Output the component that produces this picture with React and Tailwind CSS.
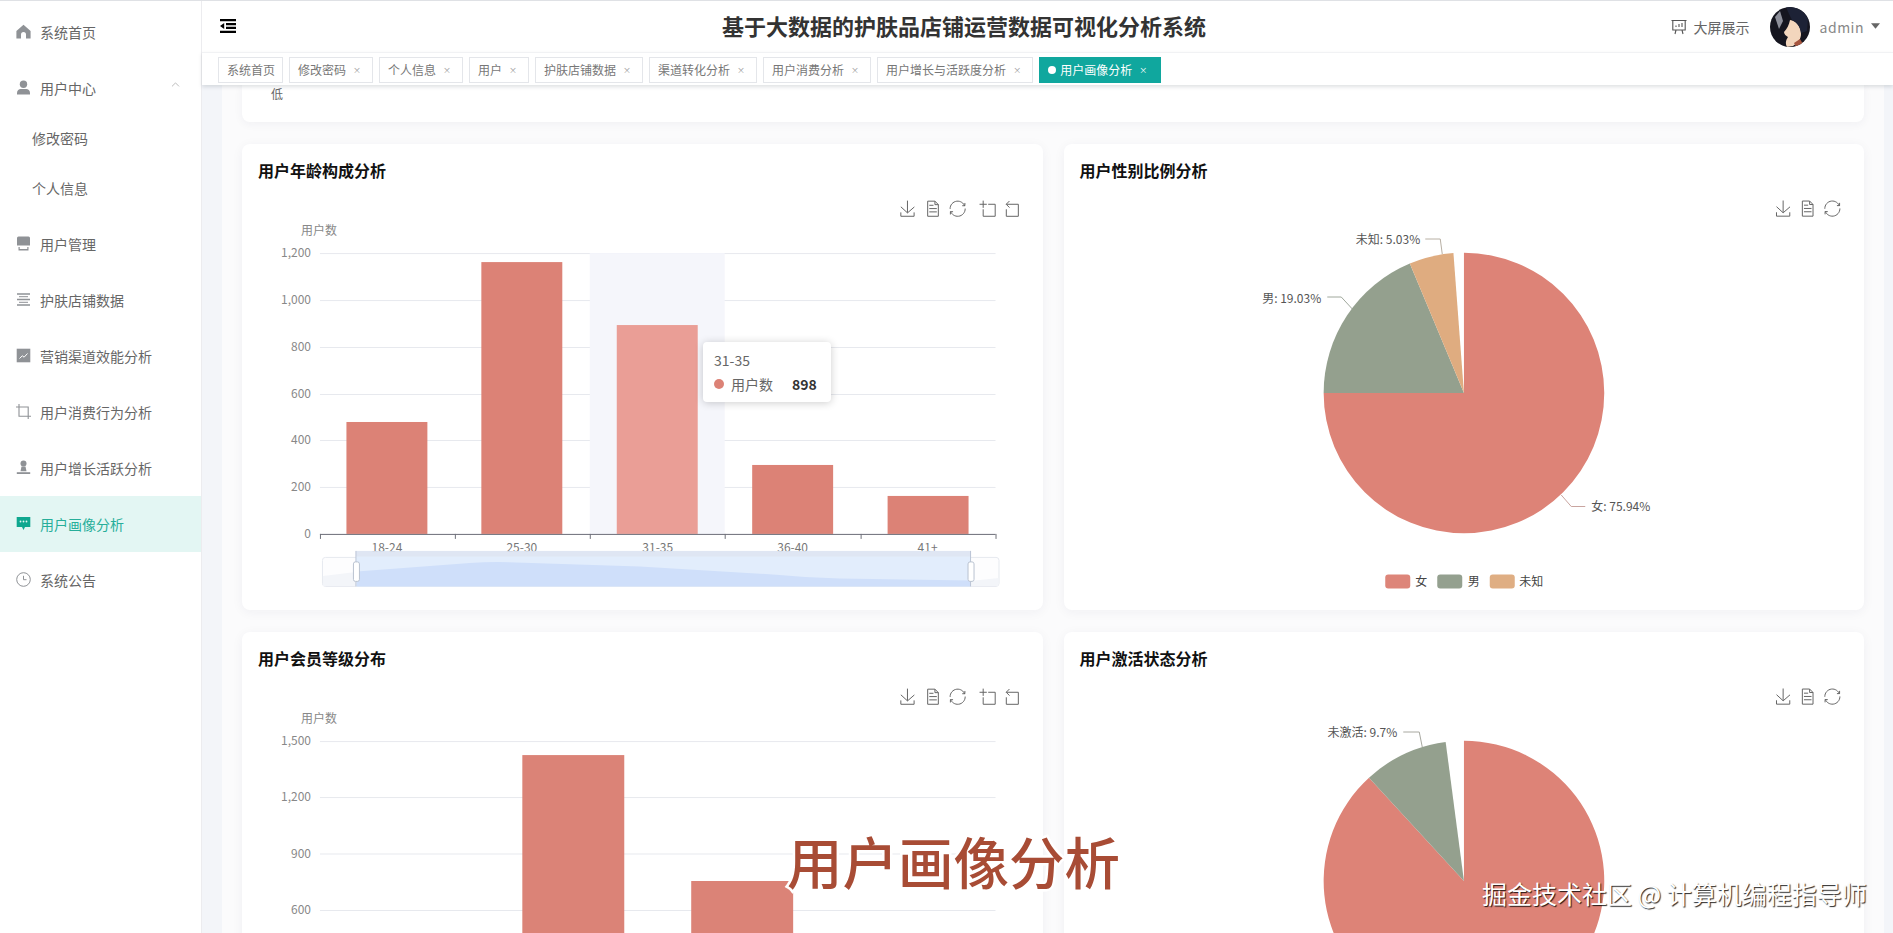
import React from "react";
import { ChevronUp } from "lucide-react";

const I = ({ children, className = "text-[#8f9296]" }) => (
  <svg viewBox="0 0 15 15" className={`w-[15px] h-[15px] shrink-0 ${className}`} fill="currentColor">
    {children}
  </svg>
);

const icons = {
  home: <I><path d="M7.5.8 14.6 7v7.4H10V10.6a2.5 2.5 0 0 0-5 0v3.8H.4V7z" /></I>,
  user: <I><circle cx="7.5" cy="4.2" r="3.7" /><path d="M1 13c0-2.6 2-4 3.6-4h5.8C12 9 14 10.4 14 13v1.4H1z" /></I>,
  goods: <I><path d="M1 2a1.5 1.5 0 0 1 1.5-1.5h10A1.5 1.5 0 0 1 14 2v7.5H1z" /><path d="M2.5 11h1.2v2h7.6v-2h1.2v3.4h-10z" /></I>,
  ops: <I><path d="M1 2h13M1 7.5h13M1 13h13" stroke="currentColor" strokeWidth="1.5" fill="none" /><path d="M3 4.7h9M3 10.3h9" stroke="currentColor" strokeWidth="1" fill="none" /></I>,
  market: <I><path d="M.7.7h13.6v13.6H.7z" /><path d="M3.5 10.5 6.3 7.8l1.8 1.4 3.4-3.7" stroke="#fff" strokeWidth="1" fill="none" /></I>,
  crop: <I><path d="M3 0v12.2h12M0 3h12.2v12" stroke="currentColor" strokeWidth="1.1" fill="none" /></I>,
  custom: <I><circle cx="7.5" cy="3.6" r="3" /><path d="M5.5 6.5h4l1 4.8h-6z" /><path d="M.8 12.2h13.4V14H.8z" /></I>,
  chat: <I className="text-[#0fa78f]"><path d="M.7 1h13.6v10H9l-1.5 3L6 11H.7z" /><circle cx="4.5" cy="5.5" r=".9" fill="#e3f6f3" /><circle cx="7.5" cy="5.5" r=".9" fill="#e3f6f3" /><circle cx="10.5" cy="5.5" r=".9" fill="#e3f6f3" /></I>,
  clock: <I><circle cx="7.5" cy="7.5" r="6.8" fill="none" stroke="currentColor" strokeWidth="1" /><path d="M7.5 3.8v3.9h3" fill="none" stroke="currentColor" strokeWidth="1" /></I>,
};

const Item = ({ icon, label, active, chevron }) => (
  <div className={`h-14 flex items-center pl-4 pb-[2px] gap-[9px] text-sm ${active ? "bg-[#e3f6f3] text-[#27ae9a]" : "text-[#666666]"}`}>
    {icons[icon]}
    <span className="pt-[1px]">{label}</span>
    {chevron && <ChevronUp size={13} strokeWidth={1.2} className="ml-auto mr-[19px] mb-[6px] text-[#999999]" />}
  </div>
);

const Sub = ({ label }) => <div className="h-[50px] flex items-center pl-8 pb-[6px] text-sm text-[#666666]">{label}</div>;

const Sidebar = () => (
  <aside className="w-[202px] shrink-0 bg-white border-r border-[#ececef] pt-[3px]">
    <Item icon="home" label="系统首页" />
    <Item icon="user" label="用户中心" chevron />
    <Sub label="修改密码" />
    <Sub label="个人信息" />
    <Item icon="goods" label="用户管理" />
    <Item icon="ops" label="护肤店铺数据" />
    <Item icon="market" label="营销渠道效能分析" />
    <Item icon="crop" label="用户消费行为分析" />
    <Item icon="custom" label="用户增长活跃分析" />
    <Item icon="chat" label="用户画像分析" active />
    <Item icon="clock" label="系统公告" />
  </aside>
);

const Avatar = () => (
  <svg viewBox="0 0 40 40" className="w-10 h-10 rounded-full shrink-0">
    <rect width="40" height="40" fill="#15151f" />
    <path d="M20 13c6 1 11 6 11 14 0 5-3 9-8 12l-6 1c-2-4-1-7 1-10-2-1-4-3-4-5 3-3 5-7 6-12z" fill="#f3d6bd" />
    <path d="M16 0c8-1 18 2 22 12l-1 12-6 2c-1-6-4-11-9-13l-3-6z" fill="#1d2236" />
    <path d="M5 10l5-6 3 10-4 8z" fill="#8d8f9a" />
    <path d="M24 36l6-4 3 5-7 3z" fill="#a6553f" />
  </svg>
);

const Header = () => (
  <header className="h-[51px] flex items-center bg-white pl-[18px] pr-[13px]">
    <svg viewBox="0 0 16 14" className="w-4 h-[14px] shrink-0 text-black mb-[1px]" fill="currentColor">
      <path d="M0 0h16v2.2H0zM0 11.8h16V14H0zM6 4h10v2.2H6zM6 7.8h10V10H6zM0 7l4.2-3v6z" />
    </svg>
    <h1 className="ml-[486px] mb-[3px] text-[22px] leading-none font-bold text-[#333333] whitespace-nowrap">基于大数据的护肤品店铺运营数据可视化分析系统</h1>
    <div className="ml-auto flex items-center text-sm text-[#666666]">
      <svg viewBox="0 0 16 16" className="w-4 h-4 mr-[7px]" fill="none" stroke="#555" strokeWidth="1.1">
        <path d="M.5 1.5h15M1.8 1.5V11h12.4V1.5M5 11l-1 4M11 11l1 4M5 8V6.5M8 8V5M11 8V4" />
      </svg>
      <span>大屏展示</span>
      <div className="ml-5 mr-[10px]"><Avatar /></div>
      <span className="text-[#888888] tracking-[0.5px]">admin</span>
      <svg viewBox="0 0 10 6" className="w-[9px] h-[6px] ml-[7px] mb-[1px]" fill="#666"><path d="M0 0h10L5 6z" /></svg>
    </div>
  </header>
);

const tabs = ["修改密码", "个人信息", "用户", "护肤店铺数据", "渠道转化分析", "用户消费分析", "用户增长与活跃度分析"];

const Tabs = () => (
  <div className="relative z-10 h-[33px] pt-[4px] pl-4 flex gap-[6px] bg-white border-t border-[#f1f2f4] shadow-[0_2px_4px_rgba(0,21,41,0.13)] text-xs">
    <div className="h-[26px] pl-2 pr-[7px] flex items-center border border-[#e4e6ea] text-[#777777]">系统首页</div>
    {tabs.map((t) => (
      <div key={t} className="h-[26px] pl-2 pr-[9px] flex items-center border border-[#e4e6ea] text-[#777777]">
        {t}
        <span className="w-3 ml-[5px] text-center text-[8px] text-[#999999]">×</span>
      </div>
    ))}
    <div className="h-[26px] pl-[9px] pr-[12px] flex items-center bg-[#10a79e] text-white">
      <span className="w-2 h-2 rounded-full bg-white mr-[4px]" />
      用户画像分析
      <span className="w-3 ml-[5px] text-center text-[8px]">×</span>
    </div>
  </div>
);

const Toolbox = ({ xs, y }) => {
  const paths = [
    "M4.7,22.9L29.3,45.5L54.7,23.4M4.6,43.6L4.6,58L53.8,58L53.8,43.6M29.2,45.1L29.2,0",
    "M17.5,17.3H33M45.4,29.5h-28M11.5,2v56H51V14.8L38.4,2H11.5zM38.4,2.2v12.7H51M45.4,41.7h-28",
    "M47,18.9h9.8V8.7M56.3,20.1C52.1,9,40.5,0.6,26.8,2.1C12.6,3.7,1.6,16.2,2.1,30.6M13,41.1H3.1v10.2M3.7,39.9c4.2,11.1,15.8,19.5,29.5,18c14.2-1.6,25.2-14.1,24.7-28.5",
    "M0,13.5h26.9M13.5,26.9V0M32.1,13.5H58V58H13.5V32.1",
    "M22,1.4L9.9,13.5l12.3,12.3M10.3,13.5H54.9v44.6H10.3v-26",
  ];
  return xs.map((x, i) => (
    <path key={i} transform={`translate(${x},${y}) scale(0.27)`} d={paths[i]} fill="none" stroke="#666" strokeWidth="1" vectorEffect="non-scaling-stroke" />
  ));
};

const Label = (p) => <text fontSize="12" dominantBaseline="central" {...p} />;

const GridChart = ({ ticks, bars, barW, bottom, dy, height, zoomBar }) => (
  <svg viewBox={`242 ${192 + dy} 801 ${height}`} className="w-full block" style={{ height }}>
    <Toolbox xs={[900, 925, 950, 980, 1004]} y={200.5 + dy} />
    <Label x="319" y={229 + dy} textAnchor="middle" fill="#888">用户数</Label>
    {ticks.map(([v, y]) => (
      <g key={v}>
        <line x1="320" x2="996" y1={y} y2={y} stroke="#e7e9ee" />
        <Label x="311" y={y - 2} textAnchor="end" fill="#888">{v}</Label>
      </g>
    ))}
    {zoomBar && <rect x="590" y="253" width="135" height="281" fill="#f5f6fb" />}
    {bars.map(([x, t, c], i) => (
      <rect key={i} x={x} y={t} width={barW} height={bottom - t} fill={c || "#dc8276"} />
    ))}
    {zoomBar && (
      <g>
        <line x1="320" x2="996" y1="534.5" y2="534.5" stroke="#6e7079" />
        {[320, 455, 590, 725, 861, 996].map((x) => (
          <line key={x} x1={x + 0.5} x2={x + 0.5} y1="534" y2="539" stroke="#6e7079" />
        ))}
        {[["18-24", 387], ["25-30", 522], ["31-35", 658], ["36-40", 793], ["41+", 928]].map(([t, x]) => (
          <Label key={t} x={x} y="546.5" textAnchor="middle" fill="#777">{t}</Label>
        ))}
        <rect x="322.5" y="557.5" width="677" height="29" rx="3" fill="#fdfdfe" stroke="#e6e9ef" />
        <path d="M323 576 L356 572 V586 H323z M971 581 L999 578 V586 H971z" fill="#f3f5f9" />
        <rect x="356" y="551" width="615.5" height="6" fill="#dce4f2" fillOpacity="0.92" />
        <rect x="356" y="557" width="615.5" height="29.5" fill="#e2edfc" />
        <path d="M357 571.7L470 563Q493 561.5 516 562.5L640 566.5L780 575Q810 578 840 578.5L971 580.6V586.5H357z" fill="#cfdffa" />
        {[356, 971].map((x) => (
          <g key={x}>
            <line x1={x} x2={x} y1="551" y2="586.5" stroke="#bcc6d6" />
            <rect x={x - 2.5} y="562" width="6" height="19.5" rx="2" fill="#fff" stroke="#b9c2d0" />
          </g>
        ))}
      </g>
    )}
  </svg>
);

const Pie = ({ cy, cut, dy, height, legend, children }) => {
  const cx = 1463.7;
  const r = 140.3;
  const pt = (a) => {
    const t = (a * Math.PI) / 180;
    return `${(cx + r * Math.sin(t)).toFixed(2)} ${(cy - r * Math.cos(t)).toFixed(2)}`;
  };
  const slice = ([a, b, c]) => (
    <path key={a} d={`M${cx} ${cy}L${pt(a)}A${r} ${r} 0 ${b - a > 180 ? 1 : 0} 1 ${pt(b)}Z`} fill={c} />
  );
  return (
    <svg viewBox={`1064 ${192 + dy} 800 ${height}`} className="w-full block" style={{ height }}>
      <Toolbox xs={[1775, 1799, 1824]} y={200.5 + dy} />
      {children}
      {cut.map(slice)}
      {legend &&
        [[1385, "女", "#dd8579", 1415], [1437, "男", "#94a08f", 1467.5], [1489.5, "未知", "#dfae83", 1519]].map(([x, t, c, tx]) => (
          <g key={t}>
            <rect x={x} y="574.5" width="25" height="14" rx="3" fill={c} />
            <Label x={tx} y="580.5" fill="#444">{t}</Label>
          </g>
        ))}
    </svg>
  );
};

const Card = ({ title, children }) => (
  <section className="bg-white rounded-lg shadow-[0_2px_12px_rgba(30,40,70,0.05)] h-[466px]">
    <h2 className="h-12 pl-4 pt-[15px] text-base leading-[22px] font-bold text-[#111111]">{title}</h2>
    {children}
  </section>
);

const Tooltip = () => (
  <div className="absolute left-[703px] top-[342px] w-[128px] h-[60px] bg-white rounded shadow-[0_1px_8px_rgba(0,0,0,0.2)] pl-[11px] pt-[8px] text-sm text-[#666666]">
    <div className="leading-5">31-35</div>
    <div className="flex items-center mt-[4px] leading-5">
      <span className="w-[10px] h-[10px] rounded-full bg-[#dc8276] mr-[7px]" />
      用户数
      <b className="ml-[19px] text-[#333333] font-bold">898</b>
    </div>
  </div>
);

export default function App() {
  return (
    <div className="relative w-[1893px] h-[933px] overflow-hidden bg-[#f3f5f9] font-['Noto_Sans_CJK_SC','Noto_Sans',sans-serif]">
      <div className="h-px bg-[#dfe1e5]" />
      <div className="flex h-[932px]">
        <Sidebar />
        <main className="flex-1 min-w-0 flex flex-col">
          <Header />
          <Tabs />
          <div className="flex-1 min-h-0 overflow-hidden pl-[20px] pr-[9px]">
            <div className="bg-[#fbfbfc] h-full px-5 overflow-hidden">
              <div className="h-[37px] bg-white rounded-b-lg shadow-[0_2px_10px_rgba(30,40,70,0.05)] pl-[29px] pt-[1px] text-xs leading-4 text-[#666666]">低</div>
              <div className="grid grid-cols-2 gap-x-[21px] gap-y-[22px] mt-[22px]">
                <Card title="用户年龄构成分析">
                  <GridChart
                    dy={0}
                    height={418}
                    zoomBar
                    barW={81}
                    bottom={534}
                    ticks={[["1,200", 253.5], ["1,000", 300.5], ["800", 347.5], ["600", 394.5], ["400", 440.5], ["200", 487.5], ["0", 534.5]]}
                    bars={[[346.5, 422], [481.5, 262], [617, 325, "#ea9e96"], [752.5, 465], [888, 496]]}
                  />
                </Card>
                <Card title="用户性别比例分析">
                  <Pie
                    cy={393}
                    dy={0}
                    height={418}
                    legend
                    cut={[[0, 270, "#dd8377"], [270, 337.3, "#94a08e"], [337.3, 355.7, "#dfac80"]]}
                  >
                    <Label x="1420" y="238.5" textAnchor="end" fill="#555">未知: 5.03%</Label>
                    <path d="M1425 239H1440L1442 254" fill="none" stroke="#b8b0a4" />
                    <Label x="1321" y="297" textAnchor="end" fill="#555">男: 19.03%</Label>
                    <path d="M1327 297H1341L1353 310" fill="none" stroke="#a0a89c" />
                    <Label x="1591" y="505.5" fill="#555">女: 75.94%</Label>
                    <path d="M1561 495L1571 506.5H1585" fill="none" stroke="#c9a5a0" />
                  </Pie>
                </Card>
                <Card title="用户会员等级分布">
                  <GridChart
                    dy={488}
                    height={418}
                    barW={102}
                    bottom={1100}
                    ticks={[["1,500", 741.5], ["1,200", 797.5], ["900", 854], ["600", 910.5]]}
                    bars={[[522.5, 755, "#db8377"], [691.5, 881, "#db8377"]]}
                  />
                </Card>
                <Card title="用户激活状态分析">
                  <Pie
                    cy={881}
                    dy={488}
                    height={418}
                    cut={[[0, 317.4, "#dd8377"], [317.4, 352.5, "#94a08e"]]}
                  >
                    <Label x="1397" y="731.5" textAnchor="end" fill="#555">未激活: 9.7%</Label>
                    <path d="M1403 732H1419L1422 747" fill="none" stroke="#a8a8a0" />
                  </Pie>
                </Card>
              </div>
            </div>
          </div>
        </main>
      </div>
      <Tooltip />
      <div className="absolute left-[787px] top-[833px] text-[55.5px] leading-[55px] font-medium whitespace-nowrap text-[#a84c35] [-webkit-text-stroke:5px_white] [paint-order:stroke_fill]">用户画像分析</div>
      <div className="absolute left-[1482px] top-[878px] text-[25px] leading-[30px] whitespace-nowrap text-white [text-shadow:1px_1px_1px_rgba(0,0,0,0.85)]">掘金技术社区 @ 计算机编程指导师</div>
    </div>
  );
}
